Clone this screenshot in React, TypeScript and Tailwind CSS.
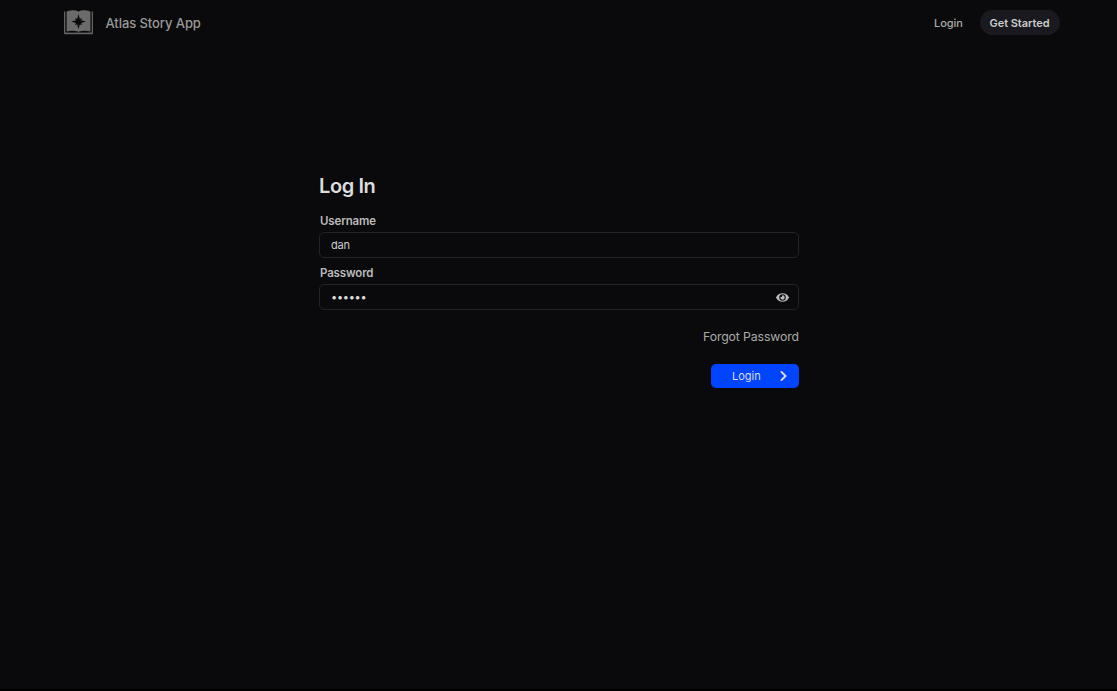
import React, { useState } from 'react';
import { FaEye, FaChevronRight } from 'react-icons/fa';

function Logo() {
  return (
    <svg viewBox="0 0 29 25" className="h-[25px] w-[29px] shrink-0">
      <path d="M0 1.5H1.3V22.4H27.7V1.5H29V23.2Q29 24.2 28 24.2H1Q0 24.2 0 23.2Z" fill="#636363" />
      <path
        fillRule="evenodd"
        fill="#6b6b6b"
        d="M2.6 1.5Q9.5-.8 14.5 1.5Q19.5-.8 26.4 1.5V21.4Q19.5 19.8 14.5 21.8Q9.5 19.8 2.6 21.4ZM14.5 4.2L13.1 8.9L11 8L11.9 10.2L7.2 11.6L11.9 13L11 15.2L13.1 14.3L14.5 19L15.9 14.3L18 15.2L17.1 13L21.8 11.6L17.1 10.2L18 8L15.9 8.9Z"
      />
      <path d="M4.5 22.2Q9.5 20.4 13.4 22.2ZM15.6 22.2Q19.5 20.4 24.5 22.2Z" fill="#0a0a0c" />
    </svg>
  );
}

export default function App() {
  const [username, setUsername] = useState('dan');
  const [password, setPassword] = useState('secret');
  const [visible, setVisible] = useState(false);

  return (
    <div className="flex h-[691px] flex-col border-b-2 border-black bg-[#0a0a0c] font-['Inter',sans-serif]">
      <header className="flex h-[45px] shrink-0 items-center justify-between pr-[57px] pl-16">
        <a className="flex items-center gap-[12.5px]">
          <Logo />
          <span className="text-[13px] leading-5 font-medium tracking-[-0.08px] text-[#999999]">Atlas Story App</span>
        </a>
        <nav className="flex items-center gap-[17px] text-[11px]">
          <a className="pt-px font-medium text-[#aaaaaa]">Login</a>
          <a className="flex h-[25px] w-[80px] items-center justify-center rounded-full bg-[#19191f] pt-px pr-px font-semibold tracking-[-0.05px] text-[#cccccc]">
            Get Started
          </a>
        </nav>
      </header>
      <main className="ml-[319px] flex w-[480px] flex-col pt-[127px]">
        <h1 className="h-7 text-xl leading-7 font-semibold tracking-[-0.4px] text-[#dddddd]">Log In</h1>
        <label className="mt-3 ml-px h-5 text-[11.5px] leading-[18px] font-semibold tracking-[-0.15px] text-[#bbbbbb]">Username</label>
        <input
          className="h-[26px] rounded-[5px] border border-[#222227] bg-transparent px-[11px] text-[11px] tracking-[-0.2px] text-[#cccccc] outline-none"
          value={username}
          onChange={(e) => setUsername(e.target.value)}
        />
        <label className="mt-1.5 ml-px h-5 text-[11.5px] leading-[18px] font-semibold tracking-[-0.15px] text-[#bbbbbb]">Password</label>
        <div className="flex h-[26px] items-center rounded-[5px] border border-[#222227] pr-[9px] pl-[11px]">
          <input
            type={visible ? 'text' : 'password'}
            className="min-w-0 flex-1 bg-transparent text-[11px] tracking-[-0.3px] text-[#dddddd] outline-none"
            value={password}
            onChange={(e) => setPassword(e.target.value)}
          />
          <button aria-label="Toggle password" onClick={() => setVisible(!visible)}>
            <FaEye className="h-[13px] w-[13px] text-[#bbbbbb]" />
          </button>
        </div>
        <a className="mt-[17px] self-end text-[12.25px] leading-5 tracking-[-0.1px] text-[#aaaaaa]">Forgot Password</a>
        <button className="mt-[16.5px] flex h-[24.5px] w-[88.5px] items-center justify-between self-end rounded-[5px] bg-[#0044ff] pr-[11px] pl-[21.5px] text-[11px] text-[#dddddd]">
          <span className="pt-px">Login</span>
          <FaChevronRight className="h-[12px] w-[9px]" />
        </button>
      </main>
    </div>
  );
}
